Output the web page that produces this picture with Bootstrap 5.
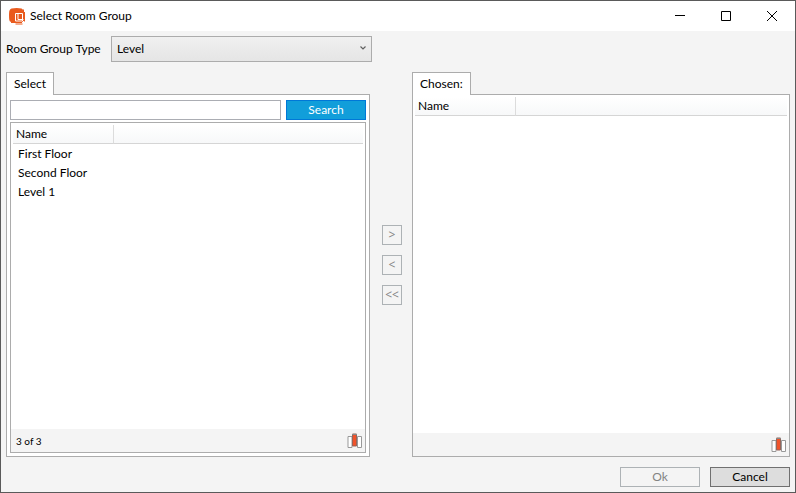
<!DOCTYPE html>
<html lang="en">
<head>
<meta charset="utf-8">
<meta name="viewport" content="width=device-width, initial-scale=1">
<title>Select Room Group</title>
<link href="https://cdn.jsdelivr.net/npm/bootstrap@5.3.0/dist/css/bootstrap.min.css" rel="stylesheet">
<style>
  body { font-family: Lato, "Open Sans", sans-serif; font-size: 12px; line-height: 16px; color: #000; background: #f4f4f4; }
  .window { border: 1px solid #5a5a5a; }
  .title-bar { height: 30px; padding-left: 8px; }
  .title-text { font-size: 12px; line-height: 16px; font-weight: 400; margin-left: 4px; }
  .caption-btn { width: 46px; height: 30px; border: 0; background: none; padding: 0; }
  .caption-btn:hover { background: #e5e5e5; }
  .caption-btn svg { display: block; margin: auto; }
  .type-row { padding: 5px 5px 10px; }
  .type-row label { width: 105px; }
  .type-box { width: 261px; }
  .type-select { height: 26px; padding: 0 5px; font-size: 12px; border: 1px solid #acacac; border-radius: 0; appearance: none; color: #000;
    background: linear-gradient(#f0f0f0, #e5e5e5); }
  .type-arrow { right: 6px; top: 9px; pointer-events: none; }
  .work-area { padding: 0 5px; }
  .pane-left { flex: 364 1 0; }
  .pane-right { flex: 378 1 0; }
  .mover { width: 42px; gap: 10px; padding-left: 2px; }
  .tab-btn { height: 23px; padding: 0 7px; border: 1px solid #acacac; border-bottom: 0; background: #fff; margin-bottom: -1px; z-index: 1; color: #000; }
  .pane-body { border: 1px solid #acacac; background: #fff; }
  .pad-body { padding: 5px 3px 3px; }
  .search-form { gap: 5px; }
  .search-box { height: 20px; padding: 0 4px; border: 1px solid #abadb3; border-radius: 0; font-size: 12px; }
  .flat-btn { height: 20px; padding: 0; border: 1px solid #707070; border-radius: 0; background: #ddd; color: #000; font-size: 12px; line-height: 16px; }
  .wide-btn { width: 80px; }
  .search-btn { background: #119eda; border-color: #0078d7; color: #fff; }
  .flat-btn:disabled { background: #f4f4f4; border-color: #adb2b5; color: #838383; opacity: 1; }
  .square-btn { width: 20px; font-family: "Open Sans", sans-serif; }
  .list-box { border: 1px solid #acacac; margin-top: 2px; }
  .list-top { padding: 2px 2px 0; }
  .name-table { width: 100%; table-layout: fixed; border-collapse: separate; border-spacing: 0; }
  .name-table th { height: 19px; padding: 0 3px; font-weight: 400; border-bottom: 1px solid #d5d5d5; background: linear-gradient(#fff, #f7f8f9); }
  .name-table th:first-child { width: 101px; border-right: 1px solid #dcdcdc; }
  .name-table tbody td { height: 19px; padding: 0 5px; }
  .list-status { height: 23px; padding: 0 3px 0 5px; background: #f4f4f4; font-size: 10px; }
  .dialog-foot { padding: 10px 5px 5px; gap: 10px; }
</style>
<script src="https://cdn.jsdelivr.net/npm/bootstrap@5.3.0/dist/js/bootstrap.bundle.min.js"></script>
</head>
<body>
<svg class="d-none" aria-hidden="true">
  <symbol id="columns" viewBox="0 0 15 16">
    <path d="M1 3.500h4v11H1z" fill="#fff" stroke="#999"/>
    <path d="M10.500 3.500h4v11h-4z" fill="#fff" stroke="#999"/>
    <path d="M5.500 1h4v12h-4z" fill="#f0532a" stroke="#96655a"/>
    <path d="M5 1.500h5" stroke="#888"/>
  </symbol>
</svg>
<div class="window d-flex flex-column vh-100">
  <header class="title-bar d-flex align-items-center bg-white">
    <svg width="17" height="17" viewBox="0 0 17 17" aria-hidden="true">
      <path d="M2.500.5Q8-.4 12.500.5q1.500.3 1.500 2V14H2.500Q.5 14 .3 12-.3 7 .3 3 .7 1 2.500.5z" fill="#e95a1d"/>
      <path d="M14.500 1.500V13M15.500 4v9.500" fill="none" stroke="#e95a1d"/>
      <path d="M2 14.500h11M6.500 16h7" fill="none" stroke="#e95a1d"/>
      <path d="M6.500 5.500h7v7.500h-7zM9 6v5.500h5.500" fill="none" stroke="#fff"/>
    </svg>
    <h1 class="title-text mb-0 me-auto">Select Room Group</h1>
    <button class="caption-btn" type="button" aria-label="Minimize"><svg width="10" height="10" viewBox="0 0 10 10"><path d="M0 4.500h10" stroke="#000"/></svg></button>
    <button class="caption-btn" type="button" aria-label="Maximize"><svg width="10" height="10" viewBox="0 0 10 10"><path d="M.5.5h9v9h-9z" fill="none" stroke="#000"/></svg></button>
    <button class="caption-btn" type="button" aria-label="Close"><svg width="10" height="10" viewBox="0 0 10 10"><path d="M0 0l10 10M10 0L0 10" stroke="#000"/></svg></button>
  </header>

  <div class="type-row d-flex align-items-center">
    <label for="groupType">Room Group Type</label>
    <div class="type-box position-relative">
      <select id="groupType" class="type-select w-100 d-block"><option>Level</option></select>
      <svg class="type-arrow position-absolute" width="6" height="6" viewBox="0 0 6 6" aria-hidden="true"><path d="M.5 1.500L3 4l2.500-2.500" fill="none" stroke="#606060" stroke-width="1.200"/></svg>
    </div>
  </div>

  <main class="work-area d-flex flex-grow-1">
    <section class="pane-left d-flex flex-column">
      <div class="d-flex" role="tablist"><button class="tab-btn position-relative" type="button" role="tab" aria-selected="true">Select</button></div>
      <div class="pane-body pad-body d-flex flex-column flex-grow-1">
        <form class="search-form d-flex">
          <input class="search-box flex-grow-1" type="text" aria-label="Search text">
          <button class="flat-btn search-btn wide-btn" type="button">Search</button>
        </form>
        <div class="list-box d-flex flex-column flex-grow-1">
          <div class="list-top flex-grow-1">
            <table class="name-table">
              <thead><tr><th scope="col">Name</th><th></th></tr></thead>
              <tbody>
                <tr><td>First Floor</td><td></td></tr>
                <tr><td>Second Floor</td><td></td></tr>
                <tr><td>Level 1</td><td></td></tr>
              </tbody>
            </table>
          </div>
          <div class="list-status d-flex align-items-center justify-content-between">
            <span>3 of 3</span>
            <svg width="15" height="16" aria-hidden="true"><use href="#columns"/></svg>
          </div>
        </div>
      </div>
    </section>

    <div class="mover d-flex flex-column align-items-center justify-content-center">
      <button class="flat-btn square-btn" type="button" disabled>&gt;</button>
      <button class="flat-btn square-btn" type="button" disabled>&lt;</button>
      <button class="flat-btn square-btn" type="button" disabled>&lt;&lt;</button>
    </div>

    <section class="pane-right d-flex flex-column">
      <div class="d-flex" role="tablist"><button class="tab-btn position-relative" type="button" role="tab" aria-selected="true">Chosen:</button></div>
      <div class="pane-body d-flex flex-column flex-grow-1">
        <div class="list-top flex-grow-1">
          <table class="name-table">
            <thead><tr><th scope="col">Name</th><th></th></tr></thead>
          </table>
        </div>
        <div class="list-status d-flex align-items-center justify-content-end">
          <svg width="15" height="16" aria-hidden="true"><use href="#columns"/></svg>
        </div>
      </div>
    </section>
  </main>

  <footer class="dialog-foot d-flex justify-content-end">
    <button class="flat-btn wide-btn" type="button" disabled>Ok</button>
    <button class="flat-btn wide-btn" type="button">Cancel</button>
  </footer>
</div>
</body>
</html>
